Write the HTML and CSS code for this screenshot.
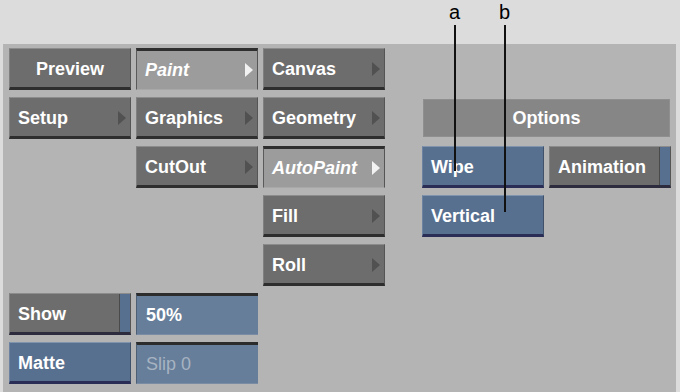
FILE: index.html
```html
<!DOCTYPE html>
<html lang="en">
<head>
  <meta charset="UTF-8">
  <title>Paint Menu</title>
  <link rel="stylesheet" href="styles.css">
</head>
<body>

  <div class="callouts">
    <span class="callout-label label-a">a</span>
    <span class="callout-label label-b">b</span>
    <div class="callout-line line-a"></div>
    <div class="callout-line line-b"></div>
  </div>

  <div class="panel">
    <div class="grid">
      <!-- row 1 -->
      <div class="btn center">Preview</div>
      <div class="btn selected arrow">Paint</div>
      <div class="btn arrow">Canvas</div>
      <div></div><div></div><div></div>

      <!-- row 2 -->
      <div class="btn arrow">Setup</div>
      <div class="btn arrow">Graphics</div>
      <div class="btn arrow">Geometry</div>
      <div></div>
      <div class="options">Options</div>

      <!-- row 3 -->
      <div></div>
      <div class="btn arrow">CutOut</div>
      <div class="btn selected arrow">AutoPaint</div>
      <div></div>
      <div class="btn blue">Wipe</div>
      <div class="btn split">Animation</div>

      <!-- row 4 -->
      <div></div><div></div>
      <div class="btn arrow">Fill</div>
      <div></div>
      <div class="btn blue">Vertical</div>
      <div></div>

      <!-- row 5 -->
      <div></div><div></div>
      <div class="btn arrow">Roll</div>
      <div></div><div></div><div></div>

      <!-- row 6 -->
      <div class="btn split">Show</div>
      <div class="field">50%</div>
      <div></div><div></div><div></div><div></div>

      <!-- row 7 -->
      <div class="btn blue">Matte</div>
      <div class="field dim">Slip 0</div>
    </div>
  </div>

</body>
</html>
```

FILE: styles.css
```css
body { margin: 0; background: #dcdcdc; font-family: "Liberation Sans", Arial, sans-serif; width: 680px; height: 392px; overflow: hidden; position: relative; }

.callouts { height: 44px; }
.callout-label { position: absolute; top: 0; font-size: 20px; color: #000; line-height: 24px; }
.label-a { left: 449px; }
.label-b { left: 499px; }
.callout-line { position: absolute; top: 25px; width: 2px; background: #111; z-index: 2; }
.line-a { left: 454px; height: 146px; }
.line-b { left: 504px; height: 187px; }

.panel { margin-left: 3px; width: 673px; height: 348px; background: #b4b4b4; box-sizing: border-box; padding: 4px 0 0 6px; }
.grid { display: grid; grid-template-columns: 122px 122px 122px 27px 122px 122px; grid-auto-rows: 42px; gap: 7px 5px; }

.btn { position: relative; box-sizing: border-box; background: #6d6d6d; color: #fff; font-weight: bold; font-size: 18px; line-height: 41px; padding-left: 8px; border-top: 1px solid #8c8c8c; border-left: 1px solid #808080; border-right: 1px solid #555; border-bottom: 3px solid #2e2e2e; white-space: nowrap; overflow: hidden; }
.btn.center { text-align: center; padding-left: 0; }
.btn.arrow::after { content: ""; position: absolute; right: 4px; top: 13px; border-left: 8px solid #515151; border-top: 7px solid transparent; border-bottom: 7px solid transparent; }
.btn.selected { background: #9c9c9c; font-style: italic; border-top: 3px solid #2e2e2e; border-bottom: 1px solid #a8a8a8; border-left: 1px solid #5a5a5a; line-height: 39px; }
.btn.selected::after { border-left-color: #f2f2f2; top: 12px; }

.btn.blue { background: #57708f; border-top: 1px solid #8194ad; border-left: 1px solid #6d82a0; border-right: 1px solid #3f516b; border-bottom: 3px solid #2a2d55; }
.btn.split { background: linear-gradient(to right, #6d6d6d 109px, #4a4a4a 109px, #4a4a4a 110px, #57708f 110px); border-top-color: #8c8c8c; border-bottom: 3px solid #2c2c3e; }

.options { grid-column: 5 / span 2; margin: 2px 1px 2px 1px; background: #868686; border: 1px solid #8f8f8f; color: #fff; font-weight: bold; font-size: 18px; text-align: center; line-height: 37px; }

.field { box-sizing: border-box; background: #667e99; border-top: 3px solid #2c2c2c; border-left: 1px solid #4d5f74; border-bottom: 1px solid #7a8ca3; color: #fff; font-weight: bold; font-size: 18px; line-height: 39px; padding-left: 9px; }
.field.dim { color: #a6b3c2; font-weight: normal; }
```
